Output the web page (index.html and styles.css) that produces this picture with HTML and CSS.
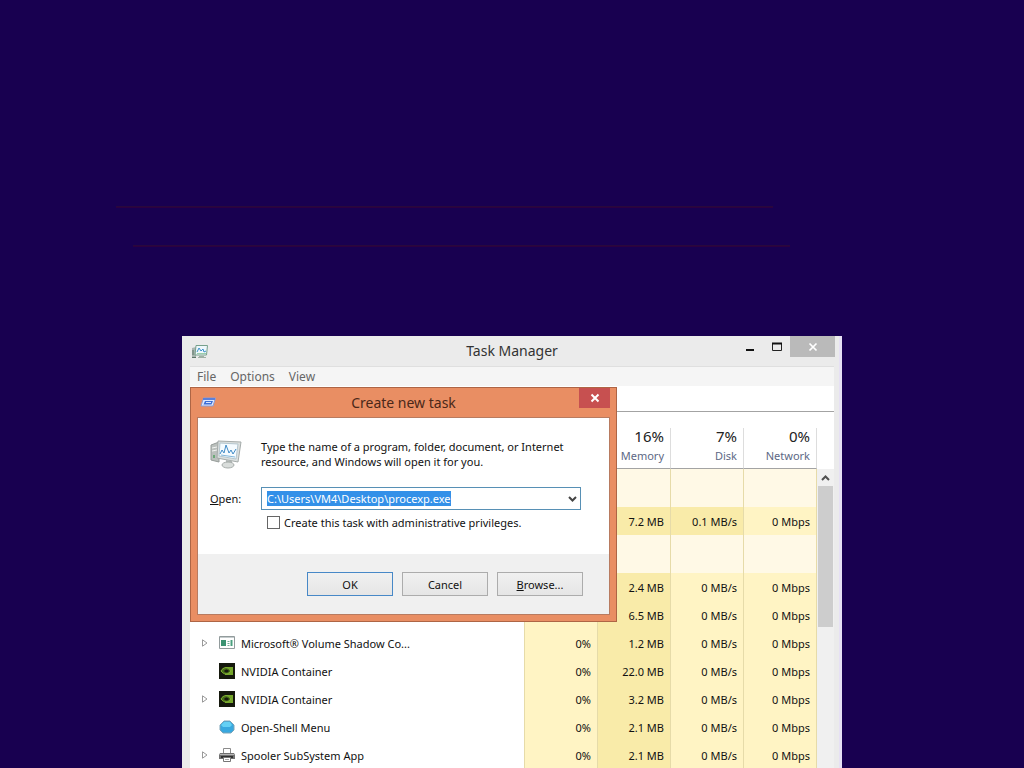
FILE: index.html
```html
<!DOCTYPE html>
<html lang="en">
<head>
    <meta charset="UTF-8">
    <meta name="viewport" content="width=device-width, initial-scale=1.0">
    <title>Task Manager</title>
    <link rel="stylesheet" href="styles.css">
</head>
<body>
    <main class="desktop">
        <div class="trace trace-first"></div>
        <div class="trace trace-second"></div>

        <section class="window manager">
            <header class="titlebar">
                <svg class="app-icon" width="16" height="16" viewBox="0 0 16 16">
                    <path d="M0 4l4-1v10l-4 1z" fill="#a9b5b0"/>
                    <path d="M1 6v5M0 13.500h4" stroke="#5d7569"/>
                    <path d="M4 1.500h11.500l-1 9.500H3z" fill="#eef7fb" stroke="#76a08b"/>
                    <path d="M5 8l2-4 2 3 2-2 1 3 2-1" fill="none" stroke="#3b91cc"/>
                    <path d="M5 9.500h9" stroke="#9acfac"/>
                    <path d="M7 12h5v1h2v1H6v-1h1z" fill="#a0b0a5"/>
                </svg>
                <h1>Task Manager</h1>
                <div class="controls">
                    <button class="control" aria-label="Minimize"><svg width="12" height="12" viewBox="0 0 12 12"><path d="M2 9h8" stroke="#111" stroke-width="2"/></svg></button>
                    <button class="control" aria-label="Maximize"><svg width="12" height="12" viewBox="0 0 12 12"><path d="M1.500 2v7.500h9V2" fill="none" stroke="#222"/><path d="M1 2.500h10" stroke="#111" stroke-width="2"/></svg></button>
                    <button class="control close" aria-label="Close"><svg width="10" height="10" viewBox="0 0 10 10"><path d="M1.500 1.500l7 7M8.500 1.500l-7 7" stroke="#fff" stroke-width="1.700"/></svg></button>
                </div>
            </header>
            <nav class="menubar">
                <button>File</button>
                <button>Options</button>
                <button>View</button>
            </nav>
            <div class="tabs"></div>
            <div class="list">
                <table class="processes">
                    <thead>
                        <tr>
                            <th class="name"></th>
                            <th></th>
                            <th><b>16%</b>Memory</th>
                            <th><b>7%</b>Disk</th>
                            <th><b>0%</b>Network</th>
                        </tr>
                    </thead>
                    <tbody>
                        <tr class="group"><td class="name"></td><td></td><td></td><td></td><td></td></tr>
                        <tr><td class="name"></td><td></td><td class="mid">7.2 MB</td><td class="mid">0.1 MB/s</td><td>0 Mbps</td></tr>
                        <tr class="group"><td class="name"></td><td></td><td></td><td></td><td></td></tr>
                        <tr><td class="name"></td><td></td><td class="mid">2.4 MB</td><td>0 MB/s</td><td>0 Mbps</td></tr>
                        <tr><td class="name"></td><td></td><td class="mid">6.5 MB</td><td>0 MB/s</td><td>0 Mbps</td></tr>
                        <tr>
                            <td class="name"><div class="process">
                                <svg class="arrow" viewBox="0 0 6 8"><path d="M.5 .8v6.400L5 4z"/></svg>
                                <svg class="icon" viewBox="0 0 16 16"><path d="M.5 1.500h15v12H.5z" fill="#fff" stroke="#929b9c"/><path d="M1 2.500h14" stroke="#c5cccd"/><path d="M2 5h5v6H2z" fill="#3b9372"/><path d="M8.500 6.500h2M8.500 8.500h2M8.500 10.500h2" stroke="#71ad97"/><path d="M12.500 5v6" stroke="#4aa07f" stroke-width="2"/></svg>
                                <span>Microsoft® Volume Shadow Co...</span>
                            </div></td>
                            <td>0%</td><td class="mid">1.2 MB</td><td>0 MB/s</td><td>0 Mbps</td>
                        </tr>
                        <tr>
                            <td class="name"><div class="process">
                                <span class="arrow"></span>
                                <svg class="icon" viewBox="0 0 16 16"><path d="M0 0h16v16H0z" fill="#15180d"/><path d="M6 4h8v8H6z" fill="#75a62b"/><path d="M2 8c2-4 7-5 10 0-3 4-7 4-10 0z" fill="#476d18" stroke="#84b534"/><path d="M5 8c2-2 3-2 5 0-2 2-3 2-5 0z" fill="#15180d"/></svg>
                                <span>NVIDIA Container</span>
                            </div></td>
                            <td>0%</td><td class="mid">22.0 MB</td><td>0 MB/s</td><td>0 Mbps</td>
                        </tr>
                        <tr>
                            <td class="name"><div class="process">
                                <svg class="arrow" viewBox="0 0 6 8"><path d="M.5 .8v6.400L5 4z"/></svg>
                                <svg class="icon" viewBox="0 0 16 16"><path d="M0 0h16v16H0z" fill="#15180d"/><path d="M6 4h8v8H6z" fill="#75a62b"/><path d="M2 8c2-4 7-5 10 0-3 4-7 4-10 0z" fill="#476d18" stroke="#84b534"/><path d="M5 8c2-2 3-2 5 0-2 2-3 2-5 0z" fill="#15180d"/></svg>
                                <span>NVIDIA Container</span>
                            </div></td>
                            <td>0%</td><td class="mid">3.2 MB</td><td>0 MB/s</td><td>0 Mbps</td>
                        </tr>
                        <tr>
                            <td class="name"><div class="process">
                                <span class="arrow"></span>
                                <svg class="icon" viewBox="0 0 16 16"><path d="M5 2h6l4 4v5l-3 3H4l-3-3V6z" fill="#38a8df" stroke="#7ca5b9"/><path d="M5 3h6l2 3-2 2H4L2 6z" fill="#64d0f4"/></svg>
                                <span>Open-Shell Menu</span>
                            </div></td>
                            <td>0%</td><td class="mid">2.1 MB</td><td>0 MB/s</td><td>0 Mbps</td>
                        </tr>
                        <tr>
                            <td class="name"><div class="process">
                                <svg class="arrow" viewBox="0 0 6 8"><path d="M.5 .8v6.400L5 4z"/></svg>
                                <svg class="icon" viewBox="0 0 16 16"><path d="M4.500 1.500h7V7h-7z" fill="#fff" stroke="#8b8b8b"/><path d="M1 6h14l1 2v4H0V8z" fill="#717171"/><path d="M1 7.500h14" stroke="#b6b6b6"/><path d="M2 10h12" stroke="#303030" stroke-width="2"/><path d="M4.500 10.500h7v4h-7z" fill="#fff" stroke="#777"/><path d="M6 12.500h4" stroke="#aaa"/></svg>
                                <span>Spooler SubSystem App</span>
                            </div></td>
                            <td>0%</td><td class="mid">2.1 MB</td><td>0 MB/s</td><td>0 Mbps</td>
                        </tr>
                    </tbody>
                </table>
                <div class="scrollbar">
                    <button aria-label="Scroll up"><svg width="9" height="6" viewBox="0 0 9 6"><path d="M1 5l3.500-3.500L8 5" fill="none" stroke="#505050" stroke-width="2"/></svg></button>
                    <div class="thumb"></div>
                </div>
            </div>
        </section>

        <section class="window dialog" role="dialog" aria-labelledby="dialog-title">
            <header class="titlebar">
                <svg class="app-icon" width="16" height="16" viewBox="0 0 16 16">
                    <path d="M3.500 4h12l-2.500 8H1z" fill="#dce8ff" stroke="#8a9bd4"/>
                    <path d="M3 5h12" stroke="#5a80dc" stroke-width="2"/>
                    <path d="M5 7h8l-1.500 3.500h-8z" fill="#3d6fd8"/>
                    <path d="M6 8.500h5" stroke="#d7e5ff"/>
                </svg>
                <h2 id="dialog-title">Create new task</h2>
                <button class="close" aria-label="Close"><svg width="10" height="10" viewBox="0 0 10 10"><path d="M1.500 1.500l7 7M8.500 1.500l-7 7" stroke="#fff" stroke-width="2"/></svg></button>
            </header>
            <form class="run">
                <div class="fields">
                    <svg class="run-icon" width="32" height="30" viewBox="0 0 32 30">
                        <path d="M1 6l8-3v20l-8-2z" fill="#bbc0bd" stroke="#969c99"/>
                        <path d="M2 9l5-1M2 12l5-1" stroke="#f3f5f3"/>
                        <path d="M3 16h2v3H3z" fill="#6ba877"/>
                        <path d="M8 2l23 1-3 20-21-4z" fill="#dce0df" stroke="#a5abaa"/>
                        <path d="M10 4l18 1-2 15-17-3z" fill="#f5fbff" stroke="#b5c6ce"/>
                        <path d="M10 15l2-4 2 3 2-8 3 8 2-3 2 4 3-5" fill="none" stroke="#408bc7"/>
                        <path d="M11 16l14 2" stroke="#83b7d9"/>
                        <path d="M16 21l6 1v3h-6z" fill="#b1b7b5"/>
                        <ellipse cx="18" cy="26" rx="6" ry="3" fill="#d9dddb" stroke="#a6acaa"/>
                    </svg>
                    <p>Type the name of a program, folder, document, or Internet resource, and Windows will open it for you.</p>
                    <label for="command"><u>O</u>pen:</label>
                    <div class="combo">
                        <input id="command" type="text" value="C:\Users\VM4\Desktop\procexp.exe" spellcheck="false">
                        <button type="button" aria-label="Show list"><svg width="9" height="6" viewBox="0 0 9 6"><path d="M1 1l3.500 3.500L8 1" fill="none" stroke="#444" stroke-width="2"/></svg></button>
                    </div>
                    <label class="privileges"><input type="checkbox">Create this task with administrative privileges.</label>
                </div>
                <div class="actions">
                    <button type="button" class="default">OK</button>
                    <button type="button">Cancel</button>
                    <button type="button"><u>B</u>rowse...</button>
                </div>
            </form>
        </section>
    </main>
    <script>
        const command = document.getElementById('command')
        command.focus()
        command.select()
    </script>
</body>
</html>
```
FILE: styles.css
```css
* {
box-sizing: border-box;
}

body {
margin: 0;
font-family: "Noto Sans", "Open Sans", sans-serif;
font-size: 11px;
line-height: 15px;
color: #111;
}

button, input {
font: inherit;
color: inherit;
}

button {
border: 0;
padding: 0;
background: none;
}

svg {
display: block;
flex: none;
}

h1, h2, p {
margin: 0;
}

.desktop {
position: relative;
height: 100vh;
overflow: hidden;
background: #180050;
}

.trace {
position: absolute;
width: 657px;
height: 2px;
background: #2c0040;
border-top: 1px solid #28083c;
}

.trace-first {
left: 116px;
top: 206px;
}

.trace-second {
left: 133px;
top: 245px;
}

.window {
position: absolute;
}

.manager {
left: 182px;
top: 336px;
bottom: 0;
width: 660px;
padding: 0 5px 0 8px;
display: flex;
flex-direction: column;
background: #ebebeb;
border-right: 3px solid #e6e0f4;
overflow: hidden;
}

.titlebar {
display: grid;
grid-template-columns: 1fr auto 1fr;
height: 30px;
flex: none;
}

.titlebar h1, .titlebar h2 {
font-size: 14px;
font-weight: normal;
line-height: 30px;
color: #333;
}

.app-icon {
margin: 8px 2px;
}

.controls {
display: flex;
justify-content: flex-end;
margin-right: -1px;
}

.control {
display: grid;
place-items: center;
width: 27px;
height: 21px;
}

.control.close {
width: 45px;
background: #bababa;
}

.menubar {
display: flex;
gap: 14px;
height: 20px;
flex: none;
padding: 0 7px;
background: #f5f5f5;
border-top: 1px solid #dfdfdf;
font-size: 12px;
color: #666;
}

.tabs {
height: 26px;
flex: none;
background: #fff;
border-bottom: 1px solid #a3a3a3;
}

.list {
display: flex;
flex: 1;
min-height: 0;
padding-top: 16px;
background: #fff;
}

.processes {
flex: 1;
table-layout: fixed;
border-spacing: 0;
align-self: flex-start;
}

.processes th {
height: 41px;
width: 73px;
padding: 0 6px 0 0;
border-left: 1px solid #ddd;
border-bottom: 1px solid #a3a3a3;
font-weight: normal;
text-align: right;
vertical-align: top;
line-height: 22px;
color: #5d6885;
}

.processes b {
display: block;
font-size: 15px;
font-weight: normal;
line-height: 17px;
color: #222;
}

.processes td {
height: 28px;
padding: 0 6px 0 0;
text-align: right;
background: #fff4c4;
border-left: 1px solid #e6dba9;
}

.processes th:last-child {
width: 74px;
border-right: 1px solid #ddd;
}

.processes td:last-child {
border-right: 1px solid #e6dba9;
}

.processes .name {
width: auto;
background: #fff;
border-left: 0;
}

.processes .mid {
background: #f9eba9;
}

.processes .group td {
height: 38px;
background: #fff9e6;
}

.process {
display: flex;
align-items: center;
padding-left: 12px;
}

.arrow {
width: 6px;
height: 8px;
margin-right: 11px;
}

.arrow path {
fill: #fff;
stroke: #999;
}

.icon {
width: 16px;
height: 16px;
margin-right: 6px;
}

.scrollbar {
width: 17px;
flex: none;
margin-top: 41px;
padding: 0 1px;
background: #f0f0f0;
}

.scrollbar button {
display: grid;
place-items: center;
width: 100%;
height: 17px;
}

.thumb {
height: 141px;
background: #cdcdcd;
}

.dialog {
left: 190px;
top: 387px;
width: 427px;
padding: 0 6px 6px;
background: #e98e63;
border: 1px solid #ae6545;
}

.dialog .titlebar {
height: 29px;
}

.dialog .titlebar h2 {
color: #4b2819;
}

.dialog .app-icon {
margin: 6px 3px;
}

.dialog .close {
justify-self: end;
display: grid;
place-items: center;
width: 31px;
height: 20px;
background: #c75050;
}

.run {
border: 1px solid #b87b60;
background: #f0f0f0;
}

.fields {
display: grid;
grid-template-columns: 51px 320px;
align-items: center;
padding: 21px 12px 24px;
background: #fff;
}

.combo {
display: flex;
height: 23px;
margin-top: 18px;
padding: 1px;
border: 1px solid #5790b5;
}

.fields > label[for] {
margin-top: 18px;
}

.combo input {
flex: 1;
min-width: 0;
height: 17px;
align-self: center;
padding: 0 0 0 4px;
border: 0;
outline: 0;
background: #fff;
}

.combo input::selection {
background: #3390e8;
color: #fff;
}

.combo button {
display: grid;
place-items: center;
width: 14px;
}

.privileges {
grid-column: 2;
display: flex;
align-items: center;
gap: 4px;
margin-top: 5px;
padding-left: 6px;
}

.privileges input {
appearance: none;
width: 13px;
height: 13px;
margin: 0;
border: 1px solid #666;
background: #fff;
}

.actions {
display: flex;
justify-content: flex-end;
gap: 9px;
padding: 18px 26px;
}

.actions button {
width: 86px;
height: 24px;
border: 1px solid #acacac;
background: linear-gradient(#f0f0f0, #e5e5e5);
}

.actions .default {
border-color: #4788c7;
}
```
